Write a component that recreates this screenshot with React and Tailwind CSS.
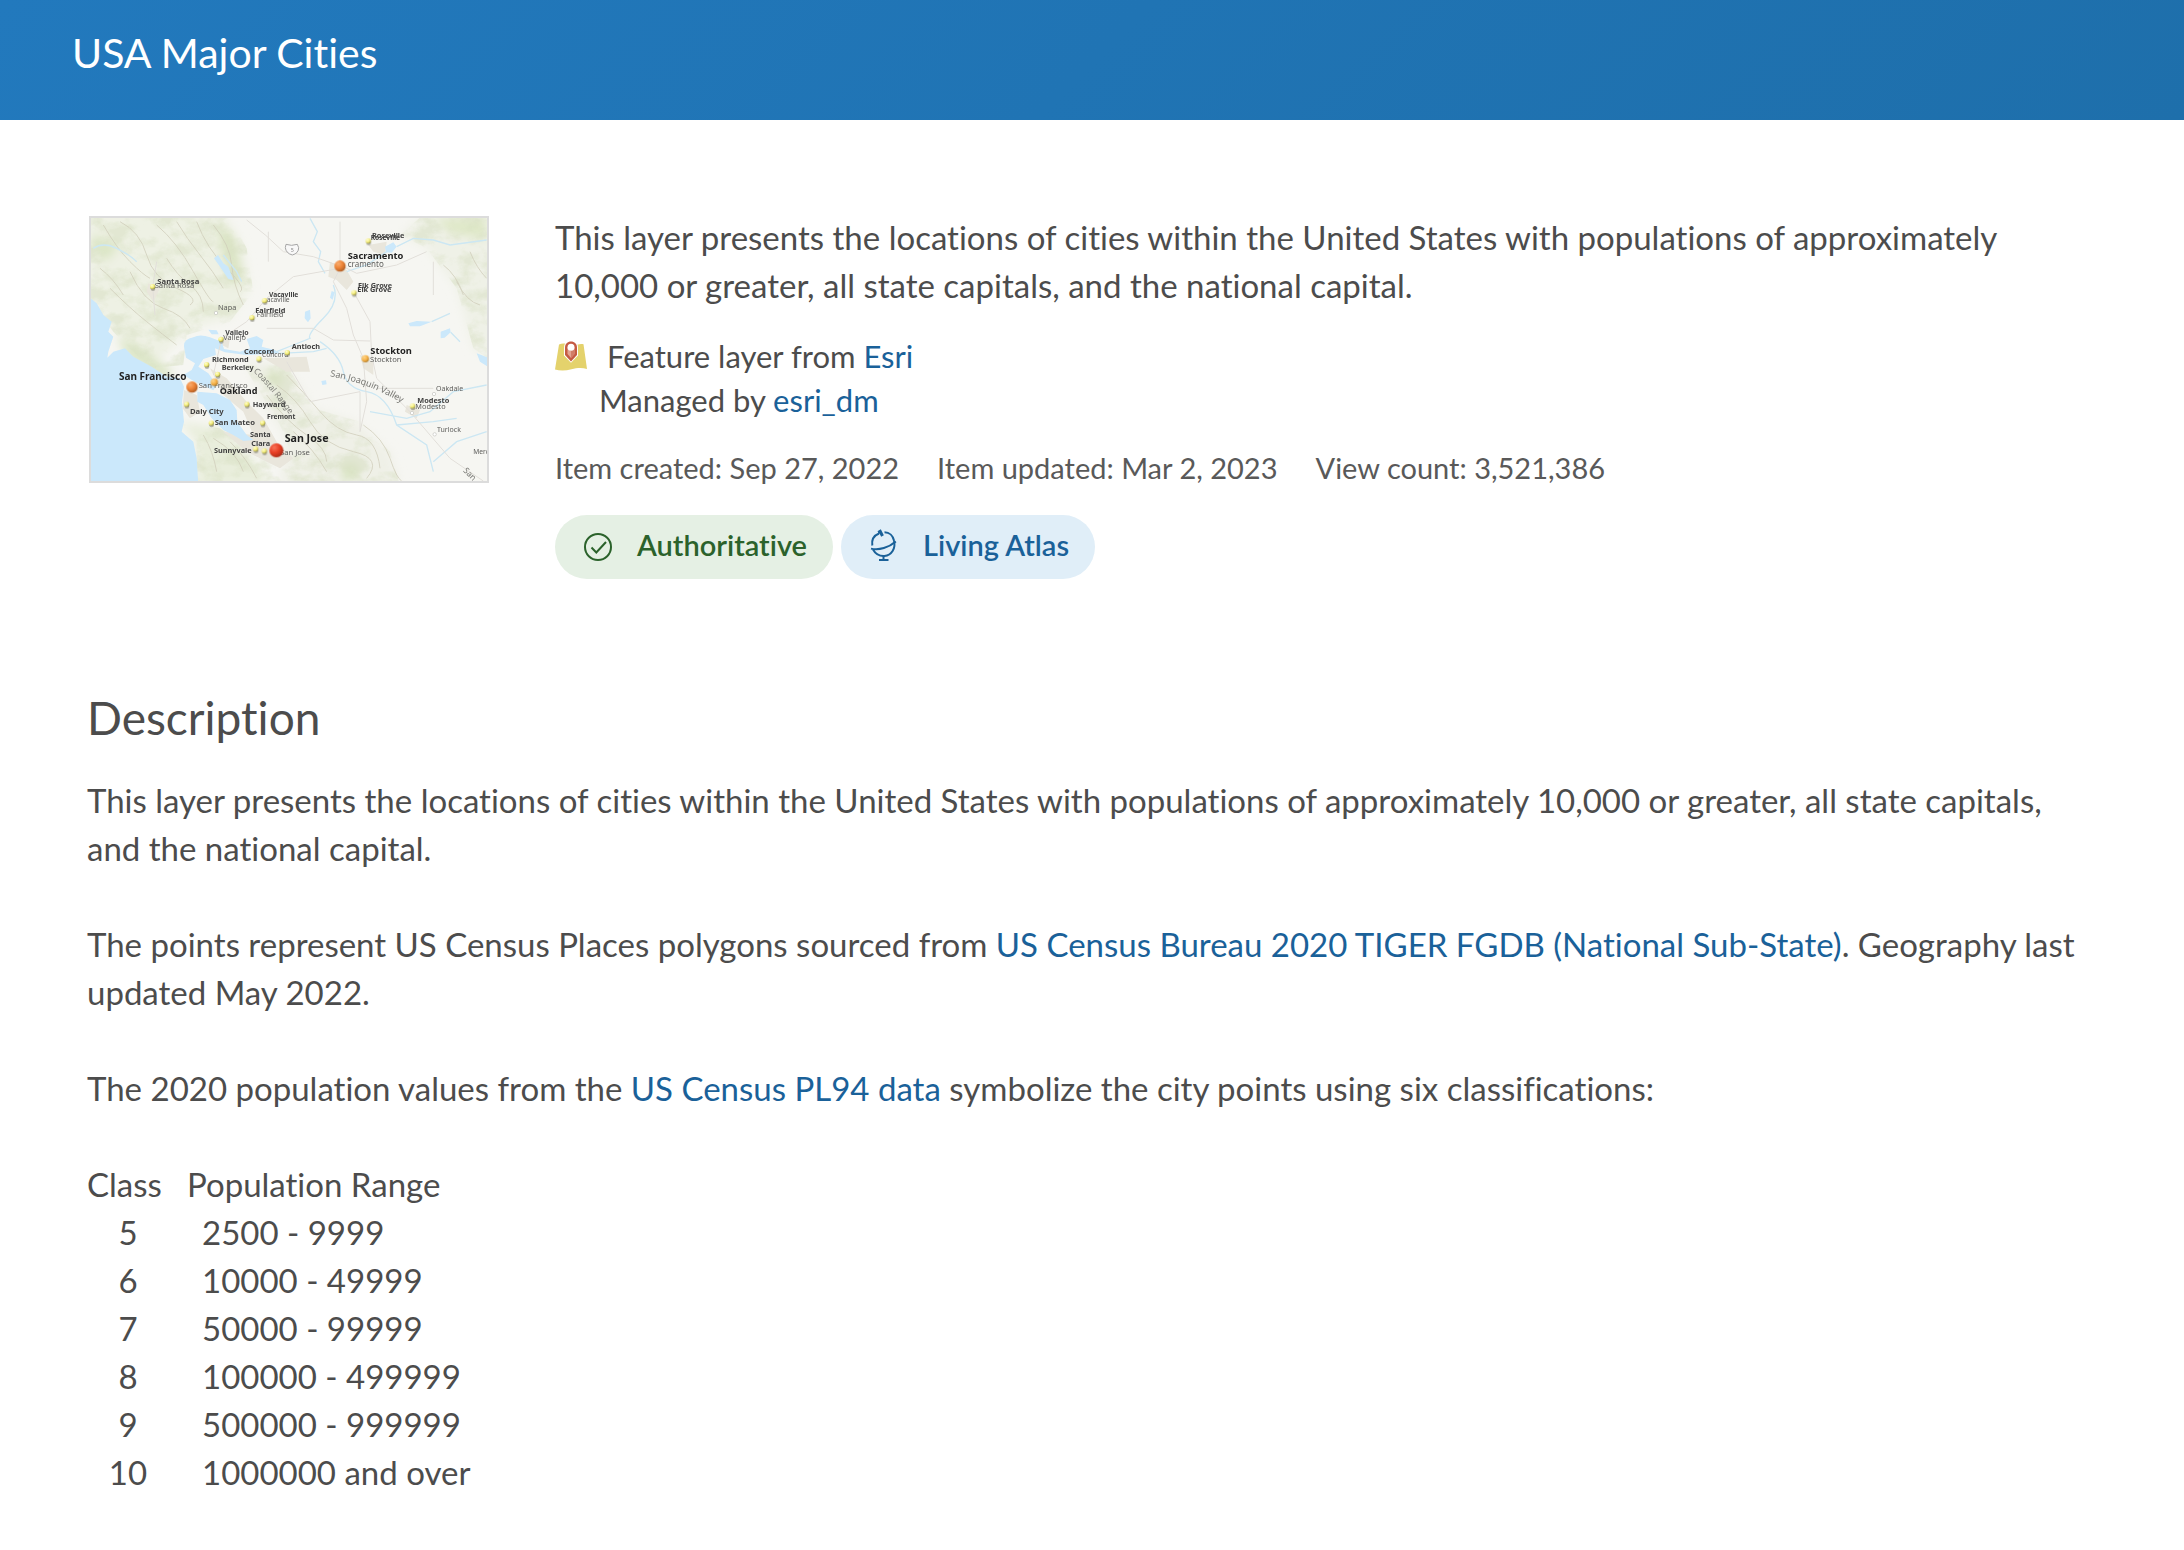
const classes = [
  ['5', '2500 - 9999'],
  ['6', '10000 - 49999'],
  ['7', '50000 - 99999'],
  ['8', '100000 - 499999'],
  ['9', '500000 - 999999'],
  ['10', '1000000 and over'],
];

const link = 'text-[#1a6199] hover:underline';

// [label, x, y, size, kind]
const labels = [
  ['Roseville', 876, 98, 22, 'mid'],
  ['Roseville', 872, 106, 20, 'mid'],
  ['Sacramento', 803, 162, 28, 'big'],
  ['cramento', 803, 186, 24, 'base'],
  ['Santa Rosa', 232, 236, 23, 'mid'],
  ['Santa Rosa', 224, 250, 23, 'base'],
  ['Elk Grove', 834, 250, 22, 'mid'],
  ['Elk Grove', 832, 262, 22, 'mid'],
  ['Vacaville', 567, 276, 20, 'mid'],
  ['acaville', 560, 290, 20, 'base'],
  ['Napa', 414, 316, 22, 'base'],
  ['Fairfield', 526, 324, 22, 'mid'],
  ['Fairfield', 530, 335, 21, 'base'],
  ['Vallejo', 436, 391, 21, 'mid'],
  ['Vallejo', 430, 404, 22, 'base'],
  ['Antioch', 635, 432, 22, 'mid'],
  ['Concord', 492, 447, 22, 'mid'],
  ['Concord', 546, 456, 20, 'base'],
  ['Stockton', 871, 448, 28, 'big'],
  ['Stockton', 870, 470, 23, 'base'],
  ['Richmond', 396, 471, 22, 'mid'],
  ['Berkeley', 425, 496, 22, 'mid'],
  ['San Francisco', 117, 526, 30, 'big'],
  ['San Francisco', 356, 550, 23, 'base'],
  ['Oakland', 419, 566, 27, 'big'],
  ['Oakdale', 1068, 557, 21, 'base'],
  ['Modesto', 1012, 593, 22, 'mid'],
  ['Modesto', 1006, 612, 22, 'base'],
  ['Hayward', 518, 606, 22, 'mid'],
  ['Daly City', 330, 626, 23, 'mid'],
  ['Fremont', 561, 641, 20, 'mid'],
  ['San Mateo', 404, 661, 23, 'mid'],
  ['Turlock', 1071, 681, 21, 'base'],
  ['Santa', 510, 697, 22, 'mid'],
  ['Clara', 514, 722, 22, 'mid'],
  ['San Jose', 614, 711, 32, 'big'],
  ['San Jose', 600, 751, 23, 'base'],
  ['Sunnyvale', 402, 745, 22, 'mid'],
  ['Merced', 1180, 748, 20, 'base'],
];

const smallDots = [
  [865, 108], [218, 245], [822, 263], [554, 287], [516, 338], [423, 403],
  [622, 443], [537, 462], [380, 479], [413, 508], [320, 598], [501, 598],
  [394, 654], [548, 654], [527, 732], [553, 738], [998, 603],
];

const labelStyle = {
  big: 'fill-[#222222] font-bold',
  mid: 'fill-[#3f3f3f] font-bold',
  base: 'fill-[#5e5e5c]',
};

function MapThumbnail() {
  return (
    <svg
      viewBox="33 39 1188 789"
      preserveAspectRatio="xMidYMid slice"
      className="block h-full w-full"
      role="img"
      aria-label="Map of major cities in northern California"
    >
      <defs>
        <filter id="terrain" x="0" y="0" width="1" height="1">
          <feTurbulence type="fractalNoise" baseFrequency="0.014 0.02" numOctaves="5" seed="11" />
          <feColorMatrix values="0 0 0 0 0.68  0 0 0 0 0.74  0 0 0 0 0.54  0 0 3.6 0 -1.5" />
          <feComposite in2="SourceGraphic" operator="in" />
        </filter>
        <filter id="wide" x="-20%" y="-20%" width="140%" height="140%">
          <feGaussianBlur stdDeviation="14" />
        </filter>
        <filter id="soft" x="-5%" y="-5%" width="110%" height="110%">
          <feGaussianBlur stdDeviation="2" />
        </filter>
        <filter id="type" x="-5%" y="-5%" width="110%" height="110%">
          <feGaussianBlur stdDeviation="1.7" />
        </filter>
        <radialGradient id="red" cx="0.35" cy="0.3" r="0.75">
          <stop offset="0" stopColor="#f87358" />
          <stop offset="0.5" stopColor="#e83f26" />
          <stop offset="1" stopColor="#a82a17" />
        </radialGradient>
        <radialGradient id="orange" cx="0.35" cy="0.3" r="0.75">
          <stop offset="0" stopColor="#f9ad6f" />
          <stop offset="0.5" stopColor="#ee8437" />
          <stop offset="1" stopColor="#ac5c24" />
        </radialGradient>
        <radialGradient id="amber" cx="0.35" cy="0.3" r="0.75">
          <stop offset="0" stopColor="#ffd78c" />
          <stop offset="0.6" stopColor="#f4ae43" />
          <stop offset="1" stopColor="#a97829" />
        </radialGradient>
        <radialGradient id="yellow" cx="0.35" cy="0.3" r="0.75">
          <stop offset="0" stopColor="#fffed0" />
          <stop offset="0.55" stopColor="#f3ec79" />
          <stop offset="1" stopColor="#8f8b45" />
        </radialGradient>
        <path id="valley" d="M750 514 Q880 535 1000 616" />
        <path id="range" d="M520 500 Q580 560 640 645" />
      </defs>

      <rect x="20" y="30" width="1220" height="810" fill="#f6f6f2" />

      {/* wooded hills */}
      <g filter="url(#wide)">
        <path fill="#eef1e4" d="M20 20H430L490 130 510 250 450 340 330 370 220 480 130 400 20 270Z" />
        <path fill="#eff1e7" d="M1040 20H1240V470L1180 430 1130 250 1040 130 960 90Z" />
        <path fill="#e9eedc" d="M300 650L420 670 520 760 570 840H350L350 710Z" />
        <path fill="#eff0e7" d="M500 470L620 480 700 610 830 650 930 740 960 840H600L620 700 540 580Z" />
        <path fill="#dfe8c8" d="M1060 40H1220V105L1110 85Z" />
        <path fill="#dbe5c4" d="M410 60L460 90 490 210 460 250 430 160Z" />
        <path fill="#dce6c6" d="M560 490L610 510 600 550 560 530ZM790 770L840 780 830 828 780 828Z" />
        <path fill="#dce6c6" d="M110 390L180 430 280 500 250 525 140 455ZM40 90L120 120 80 170 30 130Z" />
      </g>
      <g filter="url(#terrain)" opacity="0.5">
        <path d="M20 20H440L500 130 520 260 450 350 320 390 310 480 210 490 100 380 20 270Z" />
        <path d="M1040 20H1240V470L1180 430 1130 250 1040 130 960 90Z" />
        <path d="M300 650L420 670 520 740 560 750 640 760 600 660 490 480 620 480 700 610 840 650 930 740 960 840H350V710Z" />
      </g>
      <g filter="url(#soft)" fill="none" stroke="#cfccb9" strokeWidth="3" opacity="0.75">
        <path d="M120 50Q180 80 200 150T290 250T330 300M230 60Q290 110 340 200T400 290M350 50Q380 130 440 190T480 260M150 200Q190 290 250 310T330 370M90 250Q150 310 200 350T290 420" />
        <path d="M70 60Q110 130 150 170T210 220M290 50Q320 100 360 150T430 250M260 160Q290 210 330 240T370 320M60 190Q100 220 130 270M400 60Q450 120 455 180T490 300" />
        <path d="M590 540Q650 580 690 650T820 740T860 820M560 570Q620 650 680 690T740 770M850 660Q910 700 930 760T965 828M400 700Q470 740 490 800M1130 230Q1160 290 1200 300" />
        <path d="M620 510Q670 560 720 620T830 690T900 790M640 680Q700 730 740 800M370 690Q400 740 410 800M450 710Q500 760 530 820M1090 180Q1130 210 1150 270M1170 140Q1190 190 1220 220" />
      </g>

      {/* built-up areas */}
      <g filter="url(#soft)" fill="#e9e6dc">
        <path d="M750 170L800 195 820 230 800 255 770 225 745 215ZM865 120L920 110 915 150 880 140Z" />
        <path d="M312 555L350 570 360 620 330 640 308 610Z" />
        <path d="M390 490L440 520 500 590 550 640 590 710 640 760 600 790 540 760 500 740 430 680 520 690 490 620 430 570Z" />
        <path d="M550 460L680 455 690 500 620 500ZM840 450L880 470 880 510 850 490ZM980 600L1020 615 1010 640 975 620Z" />
        <path d="M420 395L450 400 445 430 425 420ZM205 235L240 250 220 290 200 260Z" />
      </g>

      {/* ocean, bays and lakes */}
      <g filter="url(#soft)" fill="#cbe8fb">
        <path d="M20 270L50 295 70 330 95 350 85 380 100 395 85 440 82 458 100 440 135 430 160 455 215 485 260 515 300 520 312 545 306 590 312 650 305 680 340 710 350 760 355 840H20Z" />
        <path d="M312 425Q310 403 340 397Q360 386 390 397L425 410 432 432 480 440 510 430 500 402 530 393 550 405 545 425 585 435 600 445 500 450 435 442 405 430 408 450 370 462 355 485 385 505 410 540 400 556 345 530 310 510 335 495 345 475 318 458Z" />
        <path d="M352 560L410 565 450 585 470 615 472 650 500 690 520 705 490 708 460 690 430 675 395 640 370 600 352 590Z" />
        <path d="M385 374L410 376 416 388 395 388ZM402 160L414 150 430 175 445 185 460 225 445 222 420 185Z" />
        <path d="M915 125L940 112 950 125 935 143 918 142ZM675 320L690 314 692 340 684 352 674 340Z" />
        <path d="M985 355L1010 348 1055 350 1020 364 990 364ZM1082 380L1110 370 1112 382 1094 398 1082 400Z" />
        <path d="M1190 445L1225 458V486L1200 470ZM724 528L738 526 740 538 727 540ZM755 258L764 262 758 284 750 278Z" />
      </g>
      <g filter="url(#soft)" fill="none" stroke="#cce7f3" strokeWidth="4">
        <path d="M690 40L712 80 700 110 722 140 715 170 735 205M760 240Q780 290 730 340T690 400L640 420 590 440" />
        <path d="M430 150L470 200 485 230M950 125L1000 100 1060 105 1110 120 1220 105M800 200L860 180 920 140" />
        <path d="M720 410Q780 450 790 500T860 560T950 660L1040 720 1060 800M870 620L980 640 1050 620 1120 560 1220 540M950 660L1060 650 1130 640M1055 350L1110 325M1112 382L1140 410" />
        <path d="M40 130Q70 110 110 130T170 170M1060 770L1130 710 1220 680M600 445L700 440 740 430" />
      </g>

      {/* highways */}
      <g filter="url(#soft)" fill="none" stroke="#e2dfda" strokeWidth="3">
        <path d="M500 45Q560 90 610 140L700 155 780 183M780 50V180L830 205 950 180 1040 140M780 190L760 230 800 310 820 390 850 460 860 590 840 680M822 263L870 350 875 450 890 520 990 620 1110 760 1210 828" />
        <path d="M230 170L218 245 225 330M780 190L640 215 560 280 500 350 425 400 400 510M560 370L700 370 760 405 870 408M890 550L1060 550M620 470L690 590 840 560V680M565 80V170M1060 170V270" />
      </g>
      <path d="M618 118Q634 124 652 118L656 128Q656 145 637 150Q618 145 616 128Z" fill="#f8f8f8" stroke="#a5a5a5" strokeWidth="3" filter="url(#type)" />

      <g filter="url(#type)" className="font-['Noto_Sans',sans-serif]">
        <text fontSize="27" className="fill-[#777773]">
          <textPath href="#valley">San Joaquin Valley</textPath>
        </text>
        <text fontSize="25" className="fill-[#7f7f7a]">
          <textPath href="#range">Coastal Range</textPath>
        </text>
        <text x="1148" y="798" fontSize="25" transform="rotate(45 1148 798)" className="fill-[#777773]">
          San
        </text>
        <text x="632" y="141" fontSize="16" className="fill-[#888888]">5</text>
        {labels.map(([name, x, y, size, kind], i) => (
          <text key={i} x={x} y={y} fontSize={size} className={labelStyle[kind]}>
            {name}
          </text>
        ))}
      </g>

      <g filter="url(#type)">
        {[[408, 324], [1062, 567], [1064, 688], [996, 624]].map(([x, y]) => (
          <circle key={x} cx={x} cy={y} r="5" fill="#ffffff" stroke="#c4c4c0" strokeWidth="2" />
        ))}
        {smallDots.map(([x, y]) => (
          <g key={`${x}-${y}`}>
            <ellipse cx={x + 1} cy={y + 7} rx="7" ry="6" fill="#77776c" opacity="0.5" />
            <circle cx={x} cy={y} r="8" fill="url(#yellow)" />
          </g>
        ))}
        {[[856, 461], [403, 532]].map(([x, y]) => (
          <circle key={x} cx={x} cy={y} r="11" fill="url(#amber)" />
        ))}
        <circle cx="780" cy="183" r="17" fill="url(#orange)" />
        <circle cx="336" cy="546" r="17" fill="url(#orange)" />
        <circle cx="589" cy="736" r="21" fill="url(#red)" />
      </g>
    </svg>
  );
}

function FeatureLayerIcon() {
  return (
    <svg viewBox="0 0 32 32" className="size-8 shrink-0" aria-hidden="true">
      <path fill="#e4d26c" d="M4 4.5C6 3.6 8 3.2 10 3.6C14 5 18 5.5 22 4.8C24.500 4 26.500 3.700 28.500 4.300L32 29C27 27.300 22 27.700 16.500 29.300C10.500 31 5 31 0 29.600Z" />
      <path fill="#fff" d="M16 .5C11.800.5 9 3.500 9 7.500V15.500L16 22.800L23 15.500V7.500C23 3.500 20.200.5 16 .5Z" />
      <path fill="#c55a42" d="M16 1.500C12.500 1.500 10 4 10 7.500V15L16 21.500L22 15V7.500C22 4 19.500 1.500 16 1.500Z" />
      <path fill="#e3a391" d="M12.500 7.500L16 11L19.500 7.500V14L16 18L12.500 14Z" />
      <path fill="#d27d68" d="M16 10V18L19.500 14V7.500Z" />
      <circle cx="16" cy="7.300" r="3.500" fill="#fff" />
    </svg>
  );
}

function CheckCircleIcon() {
  return (
    <svg viewBox="0 0 32 32" className="size-8 shrink-0" fill="none" stroke="currentColor" strokeWidth="2" aria-hidden="true">
      <circle cx="17" cy="18" r="13" />
      <path d="M10.500 18.500L15.300 23.500L25 13" />
    </svg>
  );
}

function GlobeIcon() {
  return (
    <svg viewBox="0 0 32 32" className="size-8 shrink-0" fill="none" stroke="currentColor" strokeWidth="2" aria-hidden="true">
      <path d="M5.300 16.500C4.400 10.500 7 6.500 12 4.500M17.500 3.300C22.500 3.300 26 7 27 11.500C29 19.500 24.500 26.300 17.500 27C12.500 27.300 8.500 25 6 20.500" />
      <path d="M4 19.600C12 21.500 22 18.500 28.800 12.500" />
      <path d="M12.500 1L15.500 7M12 1.500L13 4.500" strokeWidth="3" />
      <path d="M16.500 27V30.500M12 31H21.500" />
    </svg>
  );
}

export default function App() {
  return (
    <div className="min-h-screen bg-white font-['Lato',sans-serif] text-[33px] leading-[48px] text-[#4c4c4c] [font-variant-ligatures:none]">
      <header className="bg-linear-[135deg] from-[#2279bd] to-[#1e6fab] px-[72px] pt-[29px] pb-[43px]">
        <h1 className="text-[41px] leading-[48px] text-white">USA Major Cities</h1>
      </header>

      <main className="px-[87px] pt-[93px] pb-12">
        <section className="flex items-start gap-[66px]">
          <div className="mt-[3px] ml-0.5 h-[267px] w-[400px] shrink-0 border-2 border-[#dcdcdc]">
            <MapThumbnail />
          </div>
          <div className="min-w-0 flex-1">
            <p>
              This layer presents the locations of cities within the United States with populations of
              approximately 10,000 or greater, all state capitals, and the national capital.
            </p>
            <div className="mt-[25px] text-[31px] leading-[44px]">
              <p className="flex items-center">
                <FeatureLayerIcon />
                <span className="ml-5">
                  Feature layer from <a href="#esri" className={link}>Esri</a>
                </span>
              </p>
              <p className="pl-11">
                Managed by <a href="#esri-dm" className={link}>esri_dm</a>
              </p>
            </div>
            <ul className="mt-6 flex flex-wrap gap-x-[38px] text-[29px] leading-[44px] text-[#595959]">
              <li>Item created: Sep 27, 2022</li>
              <li>Item updated: Mar 2, 2023</li>
              <li>View count: 3,521,386</li>
            </ul>
            <div className="mt-[25px] flex flex-wrap gap-2 text-[29px] leading-8 font-semibold">
              <a href="#authoritative" className="flex h-16 items-center gap-6 rounded-full bg-[#e5f0e4] px-[26px] pb-1 text-[#2b622b]">
                <CheckCircleIcon />
                Authoritative
              </a>
              <a href="#living-atlas" className="flex h-16 items-center gap-6 rounded-full bg-[#e0eef8] px-[26px] pb-1 text-[#1a6199]">
                <GlobeIcon />
                Living Atlas
              </a>
            </div>
          </div>
        </section>

        <section className="mt-[111px]">
          <h2 className="text-[46px] leading-[56px]">Description</h2>
          <p className="mt-[30px]">
            This layer presents the locations of cities within the United States with populations of
            approximately 10,000 or greater, all state capitals, and the national capital.
          </p>
          <p className="mt-12">
            The points represent US Census Places polygons sourced from{' '}
            <a href="#tiger" className={link}>US Census Bureau 2020 TIGER FGDB (National Sub-State)</a>. Geography
            last updated May 2022.
          </p>
          <p className="mt-12">
            The 2020 population values from the <a href="#pl94" className={link}>US Census PL94 data</a> symbolize
            the city points using six classifications:
          </p>
          <table className="mt-12 border-collapse">
            <thead>
              <tr>
                <th scope="col" className="w-[100px] p-0 text-left font-normal">Class</th>
                <th scope="col" className="p-0 text-left font-normal">Population Range</th>
              </tr>
            </thead>
            <tbody>
              {classes.map(([name, range]) => (
                <tr key={name}>
                  <td className="py-0 pr-[18px] pl-0 text-center">{name}</td>
                  <td className="py-0 pr-0 pl-[15px]">{range}</td>
                </tr>
              ))}
            </tbody>
          </table>
        </section>
      </main>
    </div>
  );
}
